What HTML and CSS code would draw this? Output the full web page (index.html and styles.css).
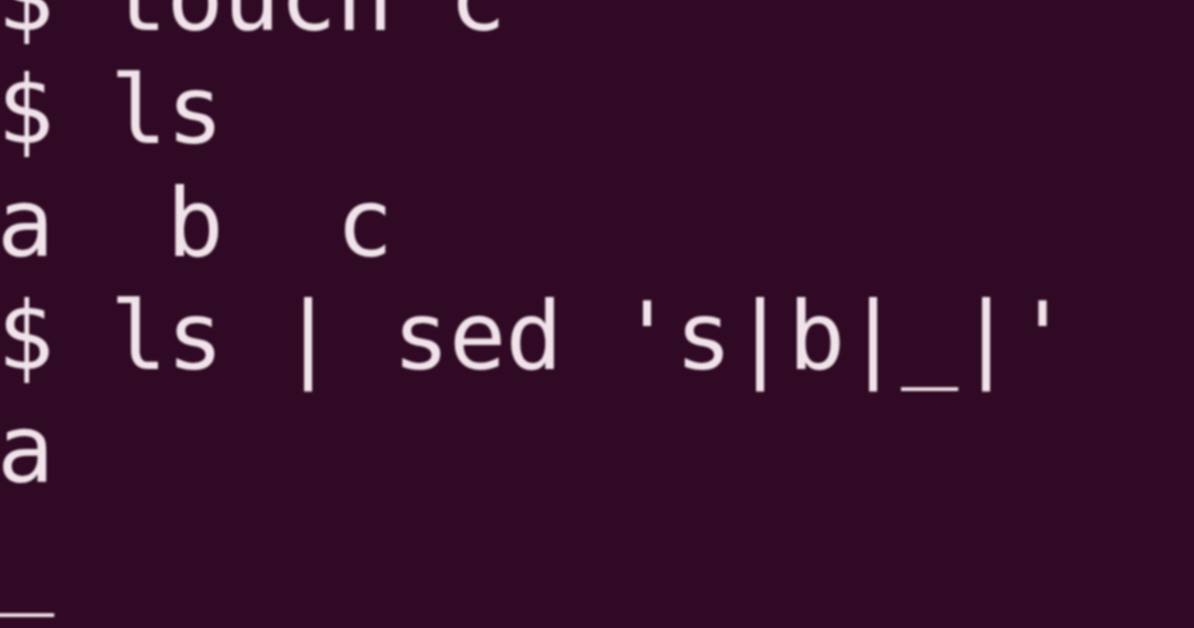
FILE: index.html
```html
<!DOCTYPE html>
<html lang="en">
<head>
<meta charset="utf-8">
<title>Terminal</title>
<link rel="stylesheet" href="styles.css">
</head>
<body>
<main class="terminal">
<pre class="screen">$ touch c
$ ls
a  b  c
$ ls | sed 's|b|_|'
a
_
c</pre>
</main>
</body>
</html>
```

FILE: styles.css
```css
html, body {
  margin: 0;
  padding: 0;
  width: 100%;
  height: 100%;
  overflow: hidden;
  background: #300a24;
}

.terminal {
  width: 100%;
  height: 100%;
  background: #300a24;
  overflow: hidden;
}

.screen {
  margin: -59px 0 0 -3px;
  font-family: "DejaVu Sans Mono", monospace;
  font-size: 95px;
  letter-spacing: -0.7px;
  line-height: 113px;
  color: #f0e4ea;
  white-space: pre;
  filter: blur(0.8px);
}
```
